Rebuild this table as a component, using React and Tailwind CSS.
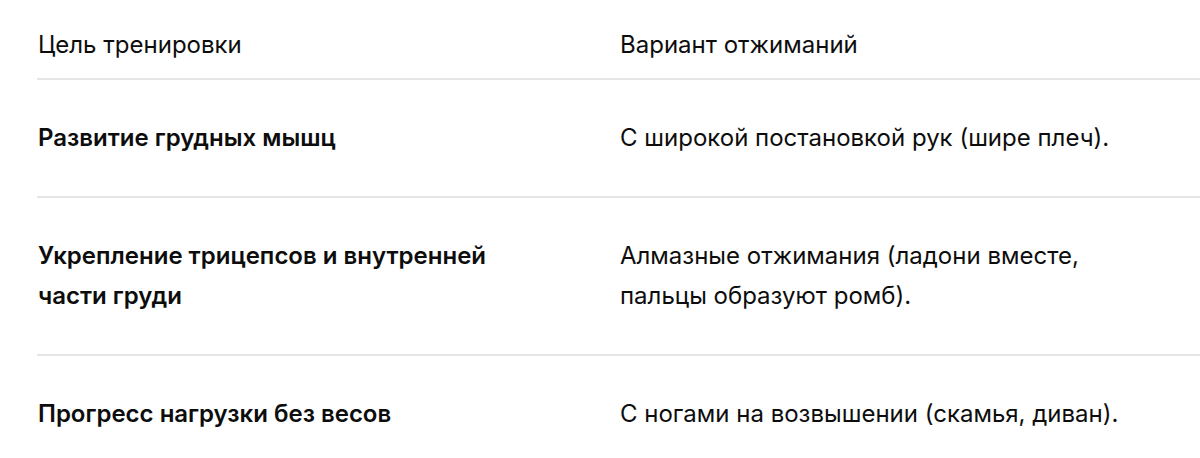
export default function App() {
  const rows = [
    ["Развитие грудных мышц", "С широкой постановкой рук (шире плеч)."],
    ["Укрепление трицепсов и внутренней части груди", "Алмазные отжимания (ладони вместе, пальцы образуют ромб)."],
    ["Прогресс нагрузки без весов", "С ногами на возвышении (скамья, диван)."],
  ];
  return (
    <div className="w-[1200px] h-[458px] overflow-hidden bg-white text-[#0d0d0d]" style={{ fontFamily: "Inter, 'Noto Sans', sans-serif" }}>
      <div className="ml-[37px] w-[1300px] text-[24px] leading-[40px]">
        <div className="grid grid-cols-[583px_1fr] border-b-2 border-[#e5e5e5] pt-[25px] pb-[13px]">
          <div className="pl-px w-[500px]">Цель тренировки</div>
          <div className="w-[520px]">Вариант отжиманий</div>
        </div>
        {rows.map((r, i) => (
          <div key={i} className={`grid grid-cols-[583px_1fr] py-[38px] ${i < rows.length - 1 ? "border-b-2 border-[#e5e5e5]" : ""}`}>
            <div className="pl-px w-[500px] font-semibold">{r[0]}</div>
            <div className="w-[520px]">{r[1]}</div>
          </div>
        ))}
      </div>
    </div>
  );
}
